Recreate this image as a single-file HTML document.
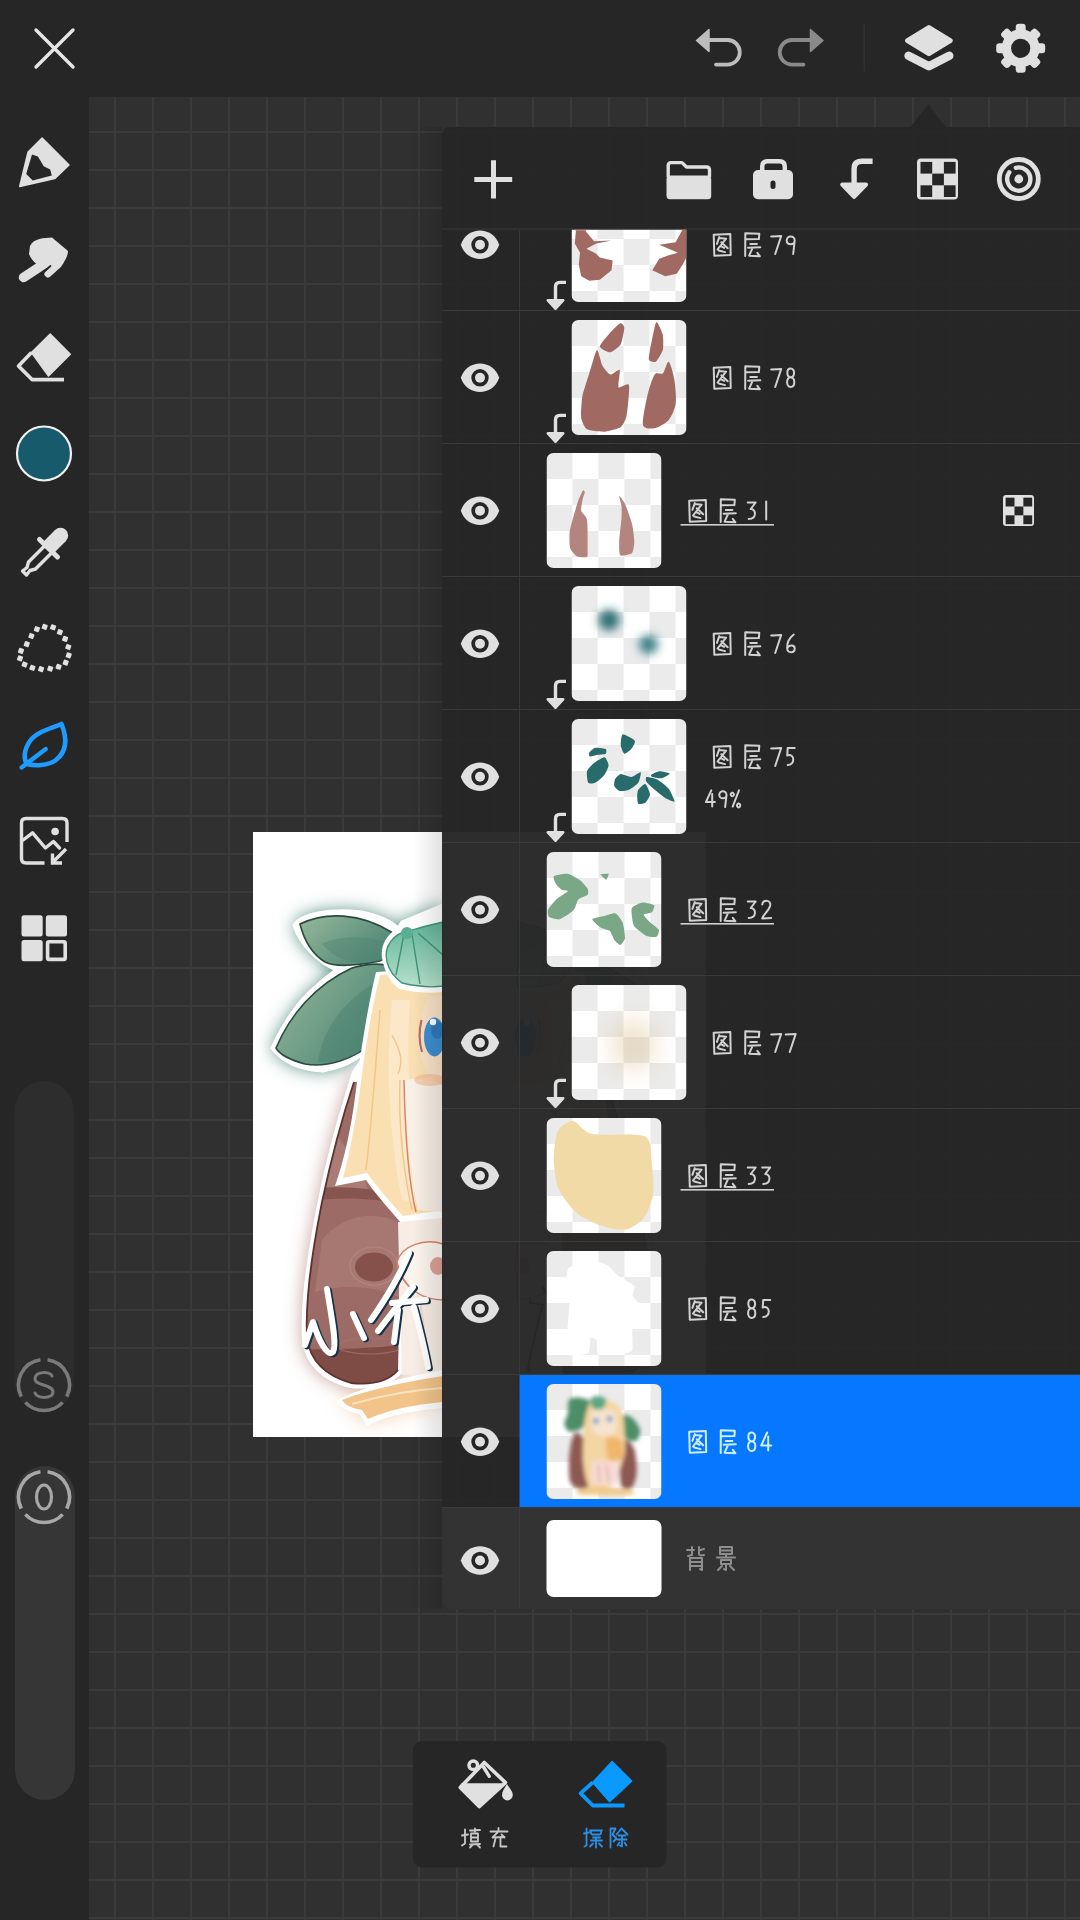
<!DOCTYPE html>
<html><head><meta charset="utf-8"><title>layers</title>
<style>html,body{margin:0;padding:0;width:1080px;height:1920px;overflow:hidden;background:#262626;font-family:"Liberation Sans",sans-serif;}</style>
</head><body>
<svg width="1080" height="1920" viewBox="0 0 1080 1920" style="position:absolute;left:0;top:0">
<defs>
<pattern id="chk" x="0" y="0" width="52" height="52" patternUnits="userSpaceOnUse">
<rect width="52" height="52" fill="#ffffff"/><rect width="26" height="26" fill="#ebebeb"/><rect x="26" y="26" width="26" height="26" fill="#ebebeb"/></pattern>
<pattern id="grid" x="0" y="0" width="38" height="38" patternUnits="userSpaceOnUse" patternTransform="translate(114,131)">
<rect width="38" height="38" fill="#303030"/><rect width="2" height="38" fill="#3a3a3a"/><rect width="38" height="2" fill="#3a3a3a"/></pattern>
<filter id="glowG" x="-30%" y="-30%" width="160%" height="160%"><feGaussianBlur stdDeviation="9"/></filter>
<filter id="soft" x="-10%" y="-10%" width="120%" height="120%"><feGaussianBlur stdDeviation="0.6"/></filter>
</defs>
<rect width="1080" height="1920" fill="#262626"/>
<rect x="89" y="97" width="991" height="1823" fill="url(#grid)"/>
<g>
<clipPath id="artclip"><rect x="253" y="832" width="453" height="605"/></clipPath>
<linearGradient id="leafg" x1="0" y1="0" x2="1" y2="0.6"><stop offset="0" stop-color="#96b99a"/><stop offset="1" stop-color="#4f8676"/></linearGradient>
<linearGradient id="bowg" x1="0" y1="0" x2="0" y2="1"><stop offset="0" stop-color="#62b59a"/><stop offset="1" stop-color="#b5e0cc"/></linearGradient>
<g clip-path="url(#artclip)">
<rect x="253" y="832" width="453" height="605" fill="#ffffff"/>
<g id="artmain">
<g filter="url(#glowG)">
<path d="M294,925 C300,914 330,908 362,912 C380,916 392,922 398,928 L402,922 L443,905 L443,990 L376,1040 C366,1055 350,1066 323,1071 C300,1070 282,1062 272,1048 C285,1020 300,1000 314,988 C322,980 330,974 336,970 C318,962 300,945 294,925 Z" fill="#4f8a7c" opacity="1"/>
<path d="M351,1076 C340,1110 328,1150 318,1200 C308,1250 300,1300 302,1340 C306,1365 320,1380 350,1388 C370,1390 390,1387 402,1373 L404,1076 Z" fill="#b07c78" opacity="0.7"/>
<path d="M339,1400 C360,1390 400,1378 443,1373 L443,1405 C410,1410 380,1420 367,1424 Z" fill="#e9b27a" opacity="0.5"/>
</g>
<!-- white silhouettes -->
<path d="M294,925 C300,914 330,908 362,912 C380,916 392,922 398,928 L402,922 L443,905 L443,990 L376,1040 C366,1055 350,1066 323,1071 C300,1070 282,1062 272,1048 C285,1020 300,1000 314,988 C322,980 330,974 336,970 C318,962 300,945 294,925 Z" fill="#ffffff" stroke="#ffffff" stroke-width="3"/>
<path d="M376,1036 C366,1052 358,1062 352,1072 C340,1110 328,1150 318,1200 C308,1250 300,1300 302,1340 C306,1365 320,1380 350,1388 C370,1390 390,1387 402,1373 L443,1373 L443,1036 Z" fill="#ffffff"/>
<!-- upper leaf -->
<path d="M300,924 C325,912 360,912 393,933 C392,948 388,958 380,961 C355,966 335,967 325,962 C312,954 304,940 300,924 Z" fill="url(#leafg)" stroke="#2a4a40" stroke-width="1.6"/>
<path d="M322,944 C340,934 372,936 392,944 C390,955 386,960 378,961 C355,965 338,962 322,944 Z" fill="#4f8474" opacity="0.45"/>
<!-- lower leaf -->
<path d="M276,1048 C290,1015 315,985 352,968 C365,964 380,963 392,966 C396,990 392,1020 375,1040 C355,1060 325,1068 305,1064 C290,1060 280,1055 276,1048 Z" fill="url(#leafg)" stroke="#2a4a40" stroke-width="1.6"/>
<path d="M318,1062 C322,1030 345,995 390,975 C394,1000 390,1022 375,1040 C358,1056 338,1064 318,1062 Z" fill="#4a7f70" opacity="0.5"/>
<!-- brown shoot -->
<clipPath id="brownclip"><path d="M354,1082 C343,1115 332,1155 322,1202 C312,1252 305,1300 307,1338 C310,1360 323,1375 351,1383 C370,1385 388,1382 398,1370 L402,1082 Z"/></clipPath>
<path d="M354,1082 C343,1115 332,1155 322,1202 C312,1252 305,1300 307,1338 C310,1360 323,1375 351,1383 C370,1385 388,1382 398,1370 L402,1082 Z" fill="#9d6b65"/>
<g clip-path="url(#brownclip)">
<path d="M320,1120 C345,1140 362,1170 368,1190 L310,1195 Z" fill="#ad817b" opacity="0.8"/>
<path d="M322,1240 C345,1212 378,1210 404,1225 L404,1300 C385,1288 350,1282 315,1292 Z" fill="#a97c76" opacity="0.75"/>
<path d="M300,1190 C340,1184 380,1188 404,1198 L404,1206 C380,1198 340,1196 300,1202 Z" fill="#87554f"/>
<ellipse cx="374" cy="1266" rx="24" ry="19" fill="none" stroke="#b58a85" stroke-width="1.2" opacity="0.8"/>
<ellipse cx="374" cy="1267" rx="19" ry="14.5" fill="#86514b"/>
<path d="M300,1349 C330,1350 370,1348 404,1345 L404,1400 L300,1400 Z" fill="#7e4b45"/>
<ellipse cx="370" cy="1346" rx="32" ry="8" fill="none" stroke="#a77570" stroke-width="1.2" opacity="0.7"/>
</g>
<path d="M354,1082 C343,1115 332,1155 322,1202 C312,1252 305,1300 307,1338 C310,1360 323,1375 351,1383 C370,1385 388,1382 398,1370" fill="none" stroke="#5a3331" stroke-width="1.8"/>
<!-- hair -->
<path d="M376,972 L443,968 L443,1217 L402,1224 C388,1208 374,1192 366,1180 L335,1186 C344,1160 351,1130 356,1090 C361,1050 367,1010 376,972 Z" fill="#ffffff"/>
<path d="M380,975 L443,972 L443,1210 L403,1216 C391,1203 378,1188 367,1173 L343,1178 C349,1156 355,1126 360,1090 C365,1050 371,1012 380,975 Z" fill="#f9dfb2"/>
<path d="M392,1000 C386,1060 388,1130 402,1200 L425,1205 C412,1140 405,1070 410,1000 Z" fill="#fce8c8"/>
<path d="M380,1010 C376,1060 372,1120 366,1170 M392,1035 C400,1050 404,1060 398,1074 M400,1080 C398,1130 405,1180 412,1210" fill="none" stroke="#efc684" stroke-width="1.4"/>
<path d="M404,1080 L443,1076 L443,1212 L418,1210 C410,1170 406,1120 404,1080 Z" fill="#f8efe6"/>
<path d="M404,1080 C405,1130 408,1180 416,1212" fill="none" stroke="#d8846c" stroke-width="1.5"/>
<!-- bow -->
<path d="M383,962 C378,944 390,928 408,925 C425,920 443,916 443,916 L443,992 C430,994 414,992 399,989 C390,982 385,972 383,962 Z" fill="#ffffff"/>
<path d="M387,962 C383,946 394,933 409,931 C425,926 443,922 443,922 L443,986 C430,988 415,986 402,983 C394,977 389,970 387,962 Z" fill="url(#bowg)" stroke="#3d9278" stroke-width="1.3"/>
<path d="M404,934 L396,975 M412,934 L420,984 M418,933 L443,955" stroke="#3d9278" stroke-width="1.4" fill="none"/>
<circle cx="407" cy="933" r="6" fill="#5aae93"/>
<!-- face -->
<path d="M428,996 C421,1010 417,1030 419,1050 C422,1068 431,1080 443,1086 L443,996 Z" fill="#fbe2c8"/>
<ellipse cx="434.5" cy="1037" rx="10.5" ry="19.5" fill="#3d8fcf"/>
<ellipse cx="437" cy="1030" rx="6" ry="9" fill="#2b70b2" opacity="0.7"/>
<path d="M421.5,1020 C419,1030 419,1042 422,1052" fill="none" stroke="#b77262" stroke-width="2.2"/>
<circle cx="433" cy="1022" r="3.2" fill="#ffffff"/>
<ellipse cx="430" cy="1080" rx="16" ry="6" fill="#f3b98e" opacity="0.6"/>
<!-- body lower -->
<path d="M398,1222 L443,1218 L443,1375 L402,1375 Z" fill="#f7ede4"/>
<path d="M397,1262 C402,1245 425,1238 443,1244 L443,1300 C425,1300 402,1290 397,1262 Z" fill="#fbf5ee" stroke="#d67f6c" stroke-width="1.5"/>
<ellipse cx="438" cy="1266" rx="8" ry="9" fill="#dea199"/>
<path d="M420,1300 L430,1372" stroke="#e8d8cc" stroke-width="2" fill="none"/>
<!-- text strokes -->
<g fill="none" stroke-linecap="round" stroke-linejoin="round">
<g stroke="#14304a" stroke-width="6.2" transform="translate(1.8,1.2)"><path d="M327,1289 C332,1320 337,1345 333,1352 C327,1358 318,1338 313,1322 L305,1345"/><path d="M353,1314 L364,1338"/><path d="M409,1253 C400,1275 385,1300 371,1320"/><path d="M392,1303 L426,1300"/><path d="M378,1331 C390,1315 402,1300 413,1287"/><path d="M398,1310 L394,1342"/><path d="M414,1307 C420,1330 425,1350 428,1367"/></g>
<g stroke="#ffffff" stroke-width="6"><path d="M327,1289 C332,1320 337,1345 333,1352 C327,1358 318,1338 313,1322 L305,1345"/><path d="M353,1314 L364,1338"/><path d="M409,1253 C400,1275 385,1300 371,1320"/><path d="M392,1303 L426,1300"/><path d="M378,1331 C390,1315 402,1300 413,1287"/><path d="M398,1310 L394,1342"/><path d="M414,1307 C420,1330 425,1350 428,1367"/></g>
</g>
<!-- swoosh -->
<path d="M337,1400 C360,1388 400,1378 443,1370 L443,1408 C410,1411 385,1416 367,1426 L360,1414 C350,1412 342,1410 337,1400 Z" fill="#ffffff"/>
<path d="M342,1400 C362,1392 402,1382 443,1376 L443,1402 C412,1405 388,1410 368,1419 L362,1410 C352,1408 346,1406 342,1400 Z" fill="#f2c48a"/>
<path d="M352,1404 C380,1396 410,1390 443,1388" stroke="#fbe3c0" stroke-width="2" fill="none"/>
</g>
<clipPath id="rightclip"><rect x="443" y="832" width="263" height="605"/></clipPath>
<g clip-path="url(#rightclip)"><use href="#artmain" transform="translate(960,0) scale(-1,1)"/></g>
</g></g>
<g>
<path d="M36,30 L73,67 M73,30 L36,67" stroke="#e6e6e6" stroke-width="3.4" stroke-linecap="round"/>
<!-- undo -->
<path d="M708,40 L727.5,40 A12.3,12.3 0 0 1 727.5,64.6 L716,64.6" fill="none" stroke="#bdbdbd" stroke-width="3.8" stroke-linecap="round"/>
<path d="M696.5,40.5 L709,29.5 L709,51.5 Z" fill="#bdbdbd" stroke="#bdbdbd" stroke-width="1.5" stroke-linejoin="round"/>
<!-- redo -->
<g transform="translate(1519.5,0) scale(-1,1)">
<path d="M708,40 L727.5,40 A12.3,12.3 0 0 1 727.5,64.6 L716,64.6" fill="none" stroke="#8a8a8a" stroke-width="3.8" stroke-linecap="round"/>
<path d="M696.5,40.5 L709,29.5 L709,51.5 Z" fill="#8a8a8a" stroke="#8a8a8a" stroke-width="1.5" stroke-linejoin="round"/>
</g>
<rect x="863.5" y="24" width="1.5" height="47" fill="#303030"/>
<!-- layers -->
<path d="M907.6,40.6 L928.9,27.6 L950.2,40.6 L928.9,53.6 Z" fill="#e0e0e0" stroke="#e0e0e0" stroke-width="5" stroke-linejoin="round"/>
<path d="M908.5,55.8 L928.9,66.2 L949.3,55.8" fill="none" stroke="#e0e0e0" stroke-width="8.4" stroke-linejoin="round" stroke-linecap="round"/>
<!-- gear -->
<g transform="translate(1020.7,48.3)"><circle r="19" fill="#e0e0e0"/><rect x="-5" y="-24.5" width="10" height="10" rx="3.2" fill="#e0e0e0" transform="rotate(0)"/><rect x="-5" y="-24.5" width="10" height="10" rx="3.2" fill="#e0e0e0" transform="rotate(45)"/><rect x="-5" y="-24.5" width="10" height="10" rx="3.2" fill="#e0e0e0" transform="rotate(90)"/><rect x="-5" y="-24.5" width="10" height="10" rx="3.2" fill="#e0e0e0" transform="rotate(135)"/><rect x="-5" y="-24.5" width="10" height="10" rx="3.2" fill="#e0e0e0" transform="rotate(180)"/><rect x="-5" y="-24.5" width="10" height="10" rx="3.2" fill="#e0e0e0" transform="rotate(225)"/><rect x="-5" y="-24.5" width="10" height="10" rx="3.2" fill="#e0e0e0" transform="rotate(270)"/><rect x="-5" y="-24.5" width="10" height="10" rx="3.2" fill="#e0e0e0" transform="rotate(315)"/><circle r="9.6" fill="#262626"/></g>
<!-- panel pointer -->
</g>
<g>
<!-- pencil -->
<path d="M19.7,186.4 L28.1,152 L42.1,138.1 L69,165 L54.7,178.6 Z" fill="#e0e0e0" stroke="#e0e0e0" stroke-width="1.5" stroke-linejoin="round"/>
<path d="M32,154.6 L37.9,156.6 L43.7,166.3 L50.2,169.5 L51.8,175.4 L32.7,180.5 L26.2,174 Z" fill="#262626"/>
<!-- smudge -->
<path d="M30,246 C34,238 44,238 52,237.5 L68,251 C68,256 65,260 63,264 C60,268 54,270 48,268 C40,268 32,262 29,254 Z" fill="#e0e0e0"/>
<path d="M44,264 L23.5,277.5" stroke="#e0e0e0" stroke-width="9.5" stroke-linecap="round"/>
<path d="M58,265 L48,274" stroke="#e0e0e0" stroke-width="7" stroke-linecap="round"/>
<path d="M50.5,266 L41,274" stroke="#262626" stroke-width="1.8" stroke-linecap="round"/>
<!-- eraser -->
<path d="M31.5,352.5 L50.2,334 L70.3,354.3 L48.5,376 Z" fill="#e0e0e0" stroke="#e0e0e0" stroke-width="1.5" stroke-linejoin="round"/>
<path d="M31.5,352.5 L18.5,366 L32,379.6 L64,379.6" fill="none" stroke="#e0e0e0" stroke-width="3.6" stroke-linejoin="round"/>
<!-- color -->
<circle cx="44" cy="453.5" r="27" fill="#175a6c" stroke="#f0f0f0" stroke-width="2.2"/>
<!-- eyedropper -->
<circle cx="60.5" cy="535.5" r="7.7" fill="#e0e0e0"/><path d="M55.06,530.06 L65.94,540.94 L53.74,553.24 L42.86,542.36 Z" fill="#e0e0e0"/>
<path d="M39.5,539.5 L57.5,557" stroke="#e0e0e0" stroke-width="5" stroke-linecap="round"/>
<path d="M44.5,546 L28.5,562 L27,567.5 L22.5,571 L26.5,575 L30,570.5 L35.5,569 L51.5,553" fill="none" stroke="#e0e0e0" stroke-width="3.4" stroke-linejoin="round"/>
<!-- lasso -->
<rect x="42.1" y="624.3" width="5.2" height="5.2" rx="0.8" fill="#e0e0e0" transform="rotate(20 44.7 626.9)"/><rect x="50.5" y="624.7" width="5.2" height="5.2" rx="0.8" fill="#e0e0e0" transform="rotate(20 53.1 627.3)"/><rect x="57.3" y="629.5" width="5.2" height="5.2" rx="0.8" fill="#e0e0e0" transform="rotate(20 59.9 632.1)"/><rect x="62.5" y="636.3" width="5.2" height="5.2" rx="0.8" fill="#e0e0e0" transform="rotate(20 65.1 638.9)"/><rect x="65.7" y="644.4" width="5.2" height="5.2" rx="0.8" fill="#e0e0e0" transform="rotate(20 68.3 647)"/><rect x="66.1" y="652.8" width="5.2" height="5.2" rx="0.8" fill="#e0e0e0" transform="rotate(20 68.7 655.4)"/><rect x="63.1" y="660.0" width="5.2" height="5.2" rx="0.8" fill="#e0e0e0" transform="rotate(20 65.7 662.6)"/><rect x="56.0" y="664.2" width="5.2" height="5.2" rx="0.8" fill="#e0e0e0" transform="rotate(20 58.6 666.8)"/><rect x="47.6" y="666.1" width="5.2" height="5.2" rx="0.8" fill="#e0e0e0" transform="rotate(20 50.2 668.7)"/><rect x="38.5" y="666.5" width="5.2" height="5.2" rx="0.8" fill="#e0e0e0" transform="rotate(20 41.1 669.1)"/><rect x="29.8" y="665.2" width="5.2" height="5.2" rx="0.8" fill="#e0e0e0" transform="rotate(20 32.4 667.8)"/><rect x="22.0" y="661.9" width="5.2" height="5.2" rx="0.8" fill="#e0e0e0" transform="rotate(20 24.6 664.5)"/><rect x="17.4" y="655.8" width="5.2" height="5.2" rx="0.8" fill="#e0e0e0" transform="rotate(20 20 658.4)"/><rect x="18.4" y="648.3" width="5.2" height="5.2" rx="0.8" fill="#e0e0e0" transform="rotate(20 21 650.9)"/><rect x="24.2" y="641.5" width="5.2" height="5.2" rx="0.8" fill="#e0e0e0" transform="rotate(20 26.8 644.1)"/><rect x="28.8" y="633.4" width="5.2" height="5.2" rx="0.8" fill="#e0e0e0" transform="rotate(20 31.4 636)"/><rect x="34.3" y="626.6" width="5.2" height="5.2" rx="0.8" fill="#e0e0e0" transform="rotate(20 36.9 629.2)"/>
<!-- leaf -->
<path d="M61.5,724 C50,729 36,732 30,741 C23,751 24,760 27,764 C34,766 48,766 56,760 C66,752 68,740 61.5,724 Z" fill="none" stroke="#1e9bff" stroke-width="4.6" stroke-linejoin="round"/>
<path d="M21.5,767.5 L45.8,749" stroke="#1e9bff" stroke-width="4.4" stroke-linecap="round"/>
<!-- image import -->
<path d="M44.5,863 L26,863 Q21.5,863 21.5,858.5 L21.5,823 Q21.5,818.5 26,818.5 L62.5,818.5 Q67,818.5 67,823 L67,842" fill="none" stroke="#e0e0e0" stroke-width="3.4"/>
<path d="M22.5,840.5 L32.6,832.8 L45.4,848 L53.4,841.5 L59.5,848" fill="none" stroke="#e0e0e0" stroke-width="3.4" stroke-linejoin="round" stroke-linecap="round"/>
<circle cx="55.1" cy="831.5" r="3.8" fill="#e0e0e0"/>
<path d="M66,849 L53,862 M52.5,853.5 L52.5,863 L62,863" fill="none" stroke="#e0e0e0" stroke-width="3.4" stroke-linecap="butt"/>
<!-- grid -->
<rect x="21.5" y="915.2" width="21.2" height="21.2" rx="2.5" fill="#e0e0e0"/>
<rect x="45.8" y="915.2" width="21.2" height="21.2" rx="2.5" fill="#e0e0e0"/>
<rect x="21.5" y="940" width="21.2" height="21.2" rx="2.5" fill="#e0e0e0"/>
<rect x="47.6" y="941.8" width="17.6" height="17.6" rx="1.5" fill="none" stroke="#e0e0e0" stroke-width="3.6"/>
<!-- sliders -->
<rect x="14.5" y="1081" width="59.5" height="330" rx="29.75" fill="#2d2d2d"/>
<rect x="15" y="1466" width="60" height="334" rx="30" fill="#363636"/>
<circle cx="44" cy="1385" r="27" fill="#2d2d2d"/><path d="M47.55,1359.75 A25.5,25.5 0 0 1 66.72,1396.58 M62.65,1402.39 A25.5,25.5 0 0 1 25.35,1402.39 M21.28,1396.58 A25.5,25.5 0 0 1 40.45,1359.75" fill="none" stroke="#7a7a7a" stroke-width="3.6"/><path d="M44,1357 L44,1365" stroke="#2d2d2d" stroke-width="3"/><path d="M52,1376 C50,1371 35,1371 35,1379 C35,1386 53,1384 53,1392 C53,1399 37,1399 35,1393" fill="none" stroke="#7a7a7a" stroke-width="3" stroke-linecap="round"/>
<circle cx="44" cy="1497" r="27" fill="#363636"/><path d="M47.55,1471.75 A25.5,25.5 0 0 1 66.72,1508.58 M62.65,1514.39 A25.5,25.5 0 0 1 25.35,1514.39 M21.28,1508.58 A25.5,25.5 0 0 1 40.45,1471.75" fill="none" stroke="#a8a8a8" stroke-width="3.6"/><path d="M44,1469 L44,1477" stroke="#363636" stroke-width="3"/><ellipse cx="44" cy="1497" rx="7.5" ry="12" fill="none" stroke="#a8a8a8" stroke-width="3.2"/>
</g>
<path d="M910,127.5 L928.5,104.5 L946,127.5 Z" fill="#262626"/>
<linearGradient id="pshadow" x1="0" y1="0" x2="1" y2="0"><stop offset="0" stop-color="#000" stop-opacity="0"/><stop offset="1" stop-color="#000" stop-opacity="0.11"/></linearGradient>
<rect x="414" y="127" width="28" height="1482" fill="url(#pshadow)"/>
<clipPath id="panelclip"><rect x="442" y="127" width="700" height="1482" rx="8"/></clipPath>
<g clip-path="url(#panelclip)">
<rect x="442" y="127" width="700" height="1482" fill="#262626" fill-opacity="0.97"/>
<path d="M493.5,160.3 L493.5,198.4 M474.3,179.4 L512.2,179.4" stroke="#e0e0e0" stroke-width="5"/>
<path d="M668.2,177 L668.2,165.6 Q668.2,162.6 671.2,162.6 L682,162.6 L686.5,167 L706.5,167 Q709.5,167 709.5,170 L709.5,177" fill="none" stroke="#e0e0e0" stroke-width="3.4" stroke-linejoin="round"/>
<rect x="666.5" y="175.5" width="44.7" height="23.8" rx="3.5" fill="#e0e0e0"/>
<path d="M762.2,172 L762.2,166.5 Q762.2,161.2 767.5,161.2 L779.5,161.2 Q784.8,161.2 784.8,166.5 L784.8,172" fill="none" stroke="#e0e0e0" stroke-width="4.5"/>
<rect x="753" y="170" width="40" height="29.3" rx="5" fill="#e0e0e0"/><rect x="770.5" y="180.5" width="5" height="8.5" rx="2.5" fill="#262626"/>
<path d="M872.6,161.3 L862,161.3 Q854.1,161.3 854.1,169 L854.1,185" fill="none" stroke="#e0e0e0" stroke-width="5.4"/>
<path d="M842.3,184.5 L866,184.5 L854.1,196.8 Z" fill="#e0e0e0" stroke="#e0e0e0" stroke-width="4.2" stroke-linejoin="round"/>
<g transform="translate(917,158.4) scale(1.0)"><rect x="0" y="0" width="41" height="41" rx="4" fill="#e0e0e0"/><rect x="3.50" y="3.50" width="11.70" height="11.70" fill="#262626"/><rect x="26.90" y="3.50" width="11.70" height="11.70" fill="#262626"/><rect x="15.20" y="15.20" width="11.70" height="11.70" fill="#262626"/><rect x="3.50" y="26.90" width="11.70" height="11.70" fill="#262626"/><rect x="26.90" y="26.90" width="11.70" height="11.70" fill="#262626"/></g>
<circle cx="1018.8" cy="179" r="19.5" fill="none" stroke="#e0e0e0" stroke-width="4.8"/>
<path d="M1015.80,167.80 A11.6,11.6 0 1 1 1009.30,172.35" fill="none" stroke="#e0e0e0" stroke-width="4.4" stroke-linecap="round"/>
<circle cx="1018.8" cy="179" r="4.4" fill="#e0e0e0"/>
<rect x="442" y="228.5" width="640" height="1.2" fill="#363636"/>
<clipPath id="rowsclip"><rect x="442" y="229.7" width="640" height="1380"/></clipPath>
<g clip-path="url(#rowsclip)">
<rect x="442" y="310" width="640" height="1" fill="#3a3a3a"/>
<g transform="translate(480,244.8)">
<path d="M-19.2,0 C-13,-19 13,-19 19.2,0 C13,19 -13,19 -19.2,0 Z" fill="#e0e0e0"/>
<circle r="8.7" fill="#262626"/><circle r="5" fill="#e0e0e0"/></g>
<g transform="translate(571.5,187)">
<clipPath id="tc79"><rect width="115" height="115" rx="7"/></clipPath>
<g clip-path="url(#tc79)"><rect width="115" height="115" fill="url(#chk)"/><path d="M4.4,43.7 L13.8,43.7 L22.5,54.2 L40.0,53.6 L24.8,56.5 L14.9,61.8 L24.3,66.4 L28.3,70.5 L41.2,73.4 L40.0,83.3 L28.3,92.7 L17.8,93.8 L9.7,89.2 L7.3,77.5 L8.5,65.8 L3.3,56.5 Z" fill="#a06a62"/>
<path d="M112.3,40.0 L115.0,40.0 L115.0,70.0 L111.2,77.5 L105.3,86.8 L93.7,89.2 L80.8,83.3 L87.8,71.7 L97.2,68.2 L106.5,65.8 L87.8,57.7 L104.2,55.3 Z" fill="#a06a62"/>
<path d="M0,40 L20,40 L13.8,43.7 L4.4,43.7 Z" fill="#a06a62"/></g></g>
<g transform="translate(545.5,279)">
<path d="M20.5,3.4 L14.5,3.4 Q10,3.4 10,8 L10,22" fill="none" stroke="#e0e0e0" stroke-width="3.4"/>
<path d="M2.4,21.3 L17.6,21.3 L10,29.6 Z" fill="#e0e0e0" stroke="#e0e0e0" stroke-width="2.8" stroke-linejoin="round"/></g>
<g transform="translate(711.7,232.5)" fill="none" stroke="#d2d2d2" stroke-width="2.0" stroke-linecap="round" stroke-linejoin="round">
<path d="M2,2.2 L18.6,1.4 L19,22.4 L2.6,23.2 Z"/>
<path d="M7.6,4.6 L5.2,11.4 M7.8,5.4 L14.4,6.2 L5.8,17 M9.6,9.8 L16,15.8 M8.6,13.4 L12.4,15.4 M7,18 L13.4,19.6"/>
</g>
<g transform="translate(744.3000000000001,232.5)" fill="none" stroke="#d2d2d2" stroke-width="2.0" stroke-linecap="round" stroke-linejoin="round">
<path d="M1,0.8 L15,1.2 L14.6,6.6 L1.2,6.8 M1,0.8 L0.9,23.6 M6,11.6 L12.6,11.6 M3.8,15.2 L16,14.8 M8.2,15.6 L4.8,23.2 L15.6,23.8 M13,20.4 L15.6,23.8"/>
</g>
<path transform="translate(770.2,234.5) scale(1.0)" d="M1,2 L11,1.5 L5,19.5" fill="none" stroke="#d2d2d2" stroke-width="2.00" stroke-linecap="round" stroke-linejoin="round"/>
<path transform="translate(784.7,234.5) scale(1.0)" d="M10,6 C10,0.5 2,0.5 2,6 C2,11 10,11 10,6 L8.5,19.5" fill="none" stroke="#d2d2d2" stroke-width="2.00" stroke-linecap="round" stroke-linejoin="round"/>
<rect x="442" y="443" width="640" height="1" fill="#3a3a3a"/>
<g transform="translate(480,377.8)">
<path d="M-19.2,0 C-13,-19 13,-19 19.2,0 C13,19 -13,19 -19.2,0 Z" fill="#e0e0e0"/>
<circle r="8.7" fill="#262626"/><circle r="5" fill="#e0e0e0"/></g>
<g transform="translate(571.5,320)">
<clipPath id="tc78"><rect width="115" height="115" rx="7"/></clipPath>
<g clip-path="url(#tc78)"><rect width="115" height="115" fill="url(#chk)"/><path d="M25.4,30.0 C26.7,29.2 29.4,42.8 30.7,45.2 C32.0,47.7 37.0,54.0 38.8,54.5 C40.5,55.0 47.4,48.5 48.2,49.8 C49.0,51.1 46.1,65.8 47.0,67.3 C47.9,68.8 56.7,62.2 57.5,65.0 C58.3,67.8 56.0,91.1 55.2,95.3 C54.4,99.5 51.5,105.4 49.3,107.0 C47.1,108.6 36.4,111.5 33.0,111.7 C29.6,111.9 17.8,110.7 15.5,109.3 C13.2,107.9 10.2,101.0 9.7,97.7 C9.2,94.4 10.0,81.1 10.8,76.7 C11.6,72.3 16.3,58.0 17.8,53.3 C19.3,48.6 24.1,30.8 25.4,30.0 Z" fill="#a06a62"/>
<path d="M48.8,3.2 C50.2,2.7 52.8,5.7 52.8,7.8 C52.8,9.9 50.7,21.8 49.3,24.2 C47.9,26.6 40.9,32.1 38.8,32.3 C36.7,32.5 28.3,28.5 28.3,26.5 C28.3,24.5 36.8,14.8 38.8,12.5 C40.8,10.2 47.4,3.7 48.8,3.2 Z" fill="#a06a62"/>
<path d="M84.9,2.0 C86.0,1.6 90.7,12.0 91.3,14.8 C91.9,17.6 92.0,27.3 91.3,30.0 C90.6,32.7 85.7,40.8 84.3,41.7 C82.9,42.6 77.6,41.6 77.3,39.3 C77.0,37.0 80.0,22.0 80.8,18.3 C81.6,14.6 83.9,2.4 84.9,2.0 Z" fill="#a06a62"/>
<path d="M97.2,41.7 C98.8,42.6 102.1,54.7 103.0,60.3 C103.9,65.9 105.0,78.4 104.2,83.7 C103.4,89.0 100.0,96.7 97.2,100.0 C94.4,103.3 86.6,107.6 83.2,108.2 C79.8,108.8 72.4,109.2 71.5,104.7 C70.6,100.2 74.6,81.0 76.2,74.3 C77.8,67.6 81.2,57.3 83.2,54.5 C85.2,51.7 89.4,55.0 91.3,53.3 C93.2,51.6 95.6,40.8 97.2,41.7 Z" fill="#a06a62"/></g></g>
<g transform="translate(545.5,412)">
<path d="M20.5,3.4 L14.5,3.4 Q10,3.4 10,8 L10,22" fill="none" stroke="#e0e0e0" stroke-width="3.4"/>
<path d="M2.4,21.3 L17.6,21.3 L10,29.6 Z" fill="#e0e0e0" stroke="#e0e0e0" stroke-width="2.8" stroke-linejoin="round"/></g>
<g transform="translate(711.7,365.5)" fill="none" stroke="#d2d2d2" stroke-width="2.0" stroke-linecap="round" stroke-linejoin="round">
<path d="M2,2.2 L18.6,1.4 L19,22.4 L2.6,23.2 Z"/>
<path d="M7.6,4.6 L5.2,11.4 M7.8,5.4 L14.4,6.2 L5.8,17 M9.6,9.8 L16,15.8 M8.6,13.4 L12.4,15.4 M7,18 L13.4,19.6"/>
</g>
<g transform="translate(744.3000000000001,365.5)" fill="none" stroke="#d2d2d2" stroke-width="2.0" stroke-linecap="round" stroke-linejoin="round">
<path d="M1,0.8 L15,1.2 L14.6,6.6 L1.2,6.8 M1,0.8 L0.9,23.6 M6,11.6 L12.6,11.6 M3.8,15.2 L16,14.8 M8.2,15.6 L4.8,23.2 L15.6,23.8 M13,20.4 L15.6,23.8"/>
</g>
<path transform="translate(770.2,367.5) scale(1.0)" d="M1,2 L11,1.5 L5,19.5" fill="none" stroke="#d2d2d2" stroke-width="2.00" stroke-linecap="round" stroke-linejoin="round"/>
<path transform="translate(784.7,367.5) scale(1.0)" d="M6,1 C1.5,1 1.5,9.5 6,9.8 C10.8,10.2 10.8,19.5 6,19.5 C1.2,19.5 1.2,10.2 6,9.8 C10.5,9.5 10.5,1 6,1 Z" fill="none" stroke="#d2d2d2" stroke-width="2.00" stroke-linecap="round" stroke-linejoin="round"/>
<rect x="442" y="576" width="640" height="1" fill="#3a3a3a"/>
<g transform="translate(480,510.8)">
<path d="M-19.2,0 C-13,-19 13,-19 19.2,0 C13,19 -13,19 -19.2,0 Z" fill="#e0e0e0"/>
<circle r="8.7" fill="#262626"/><circle r="5" fill="#e0e0e0"/></g>
<g transform="translate(546.5,453)">
<clipPath id="tc31"><rect width="115" height="115" rx="7"/></clipPath>
<g clip-path="url(#tc31)"><rect width="115" height="115" fill="url(#chk)"/><path d="M36.5,37.6 C37.1,36.8 38.4,38.3 38.3,39.3 C38.2,40.3 36.2,45.6 35.9,47.5 C35.5,49.4 34.3,56.0 34.8,58.0 C35.3,60.0 40.0,63.1 40.6,67.3 C41.2,71.5 41.3,96.3 41.2,100.0 C41.1,103.7 41.0,103.8 40.0,104.1 C39.0,104.4 32.3,104.4 30.7,103.5 C29.1,102.6 24.5,97.8 23.7,95.3 C22.9,92.8 22.8,82.3 23.1,79.0 C23.5,75.7 26.3,65.9 27.2,62.7 C28.1,59.6 30.9,50.0 31.8,47.5 C32.7,45.0 35.9,38.4 36.5,37.6 Z" fill="#b4847e"/>
<path d="M72.7,42.8 C73.0,42.6 77.2,48.2 78.5,51.0 C79.8,53.8 84.6,67.1 85.5,70.8 C86.4,74.5 87.8,85.4 87.8,88.3 C87.8,91.2 86.9,98.6 85.5,100.0 C84.1,101.4 75.1,103.5 73.8,102.3 C72.5,101.1 72.6,92.0 72.7,88.3 C72.8,84.6 74.8,68.5 75.0,65.0 C75.2,61.5 75.2,55.5 75.0,53.3 C74.8,51.1 72.4,43.0 72.7,42.8 Z" fill="#b4847e"/></g></g>
<g transform="translate(687.2,498.5)" fill="none" stroke="#d2d2d2" stroke-width="2.0" stroke-linecap="round" stroke-linejoin="round">
<path d="M2,2.2 L18.6,1.4 L19,22.4 L2.6,23.2 Z"/>
<path d="M7.6,4.6 L5.2,11.4 M7.8,5.4 L14.4,6.2 L5.8,17 M9.6,9.8 L16,15.8 M8.6,13.4 L12.4,15.4 M7,18 L13.4,19.6"/>
</g>
<g transform="translate(719.8000000000001,498.5)" fill="none" stroke="#d2d2d2" stroke-width="2.0" stroke-linecap="round" stroke-linejoin="round">
<path d="M1,0.8 L15,1.2 L14.6,6.6 L1.2,6.8 M1,0.8 L0.9,23.6 M6,11.6 L12.6,11.6 M3.8,15.2 L16,14.8 M8.2,15.6 L4.8,23.2 L15.6,23.8 M13,20.4 L15.6,23.8"/>
</g>
<path transform="translate(745.7,500.5) scale(1.0)" d="M2,2 L10,2 L5,8.5 C11,8.5 11,18.5 3,18.5" fill="none" stroke="#d2d2d2" stroke-width="2.00" stroke-linecap="round" stroke-linejoin="round"/>
<path transform="translate(760.2,500.5) scale(1.0)" d="M6,1 L6,19" fill="none" stroke="#d2d2d2" stroke-width="2.00" stroke-linecap="round" stroke-linejoin="round"/>
<rect x="680.5" y="524" width="93.5" height="1.6" fill="#cfcfcf"/>
<g transform="translate(1003,495) scale(0.7560975609756098)"><rect x="0" y="0" width="41" height="41" rx="4" fill="#e0e0e0"/><rect x="3.50" y="3.50" width="11.70" height="11.70" fill="#262626"/><rect x="26.90" y="3.50" width="11.70" height="11.70" fill="#262626"/><rect x="15.20" y="15.20" width="11.70" height="11.70" fill="#262626"/><rect x="3.50" y="26.90" width="11.70" height="11.70" fill="#262626"/><rect x="26.90" y="26.90" width="11.70" height="11.70" fill="#262626"/></g>
<rect x="442" y="709" width="640" height="1" fill="#3a3a3a"/>
<g transform="translate(480,643.8)">
<path d="M-19.2,0 C-13,-19 13,-19 19.2,0 C13,19 -13,19 -19.2,0 Z" fill="#e0e0e0"/>
<circle r="8.7" fill="#262626"/><circle r="5" fill="#e0e0e0"/></g>
<g transform="translate(571.5,586)">
<clipPath id="tc76"><rect width="115" height="115" rx="7"/></clipPath>
<g clip-path="url(#tc76)"><rect width="115" height="115" fill="url(#chk)"/><defs><filter id="bl76" x="-80%" y="-80%" width="260%" height="260%"><feGaussianBlur stdDeviation="4.8"/></filter></defs>
<g filter="url(#bl76)"><circle cx="37.5" cy="34" r="10.5" fill="#2f6e74"/><circle cx="77" cy="58.5" r="9.5" fill="#3b7f86"/></g></g></g>
<g transform="translate(545.5,678)">
<path d="M20.5,3.4 L14.5,3.4 Q10,3.4 10,8 L10,22" fill="none" stroke="#e0e0e0" stroke-width="3.4"/>
<path d="M2.4,21.3 L17.6,21.3 L10,29.6 Z" fill="#e0e0e0" stroke="#e0e0e0" stroke-width="2.8" stroke-linejoin="round"/></g>
<g transform="translate(711.7,631.5)" fill="none" stroke="#d2d2d2" stroke-width="2.0" stroke-linecap="round" stroke-linejoin="round">
<path d="M2,2.2 L18.6,1.4 L19,22.4 L2.6,23.2 Z"/>
<path d="M7.6,4.6 L5.2,11.4 M7.8,5.4 L14.4,6.2 L5.8,17 M9.6,9.8 L16,15.8 M8.6,13.4 L12.4,15.4 M7,18 L13.4,19.6"/>
</g>
<g transform="translate(744.3000000000001,631.5)" fill="none" stroke="#d2d2d2" stroke-width="2.0" stroke-linecap="round" stroke-linejoin="round">
<path d="M1,0.8 L15,1.2 L14.6,6.6 L1.2,6.8 M1,0.8 L0.9,23.6 M6,11.6 L12.6,11.6 M3.8,15.2 L16,14.8 M8.2,15.6 L4.8,23.2 L15.6,23.8 M13,20.4 L15.6,23.8"/>
</g>
<path transform="translate(770.2,633.5) scale(1.0)" d="M1,2 L11,1.5 L5,19.5" fill="none" stroke="#d2d2d2" stroke-width="2.00" stroke-linecap="round" stroke-linejoin="round"/>
<path transform="translate(784.7,633.5) scale(1.0)" d="M9,1 C4,5 2,10 2.5,15 C3,20 10,20 10,15 C10,11 4,11 2.8,14.5" fill="none" stroke="#d2d2d2" stroke-width="2.00" stroke-linecap="round" stroke-linejoin="round"/>
<rect x="442" y="842" width="640" height="1" fill="#3a3a3a"/>
<g transform="translate(480,776.8)">
<path d="M-19.2,0 C-13,-19 13,-19 19.2,0 C13,19 -13,19 -19.2,0 Z" fill="#e0e0e0"/>
<circle r="8.7" fill="#262626"/><circle r="5" fill="#e0e0e0"/></g>
<g transform="translate(571.5,719)">
<clipPath id="tc75"><rect width="115" height="115" rx="7"/></clipPath>
<g clip-path="url(#tc75)"><rect width="115" height="115" fill="url(#chk)"/><g fill="#276b6b">
<path d="M51.1,15.4 C52.5,14.9 62.4,20.3 63.3,21.8 C64.2,23.3 60.8,28.7 59.8,30.0 C58.8,31.3 53.8,35.1 52.8,34.7 C51.8,34.4 49.5,28.4 49.3,26.5 C49.1,24.6 49.7,15.9 51.1,15.4 Z"/>
<path d="M17.8,33.5 C18.3,32.6 22.1,29.2 23.7,28.8 C25.3,28.4 33.2,29.4 34.2,30.0 C35.2,30.6 35.0,34.1 34.2,34.7 C33.4,35.3 27.6,35.5 26.0,35.8 C24.4,36.1 19.2,37.8 18.4,37.6 C17.6,37.4 17.3,34.4 17.8,33.5 Z"/>
<path d="M15.5,52.2 C16.1,50.2 20.8,45.4 22.5,44.0 C24.2,42.6 31.5,38.0 33.0,38.2 C34.5,38.4 37.1,44.5 37.1,46.3 C37.1,48.0 34.3,54.0 33.0,55.7 C31.7,57.5 25.3,63.0 23.7,63.8 C22.1,64.6 17.5,65.0 16.7,63.8 C15.9,62.6 14.9,54.2 15.5,52.2 Z"/>
<path d="M43.5,60.3 C44.1,59.1 47.7,55.3 49.3,55.1 C50.9,54.9 57.8,58.2 59.8,58.0 C61.8,57.8 68.5,52.7 69.2,53.3 C69.9,53.9 68.0,62.0 66.8,63.8 C65.6,65.5 59.4,70.0 57.5,70.8 C55.6,71.6 49.7,72.3 48.2,72.0 C46.7,71.7 43.4,68.5 42.9,67.3 C42.4,66.1 42.9,61.5 43.5,60.3 Z"/>
<path d="M66.8,70.8 C67.6,69.6 72.6,64.5 73.8,65.0 C75.0,65.5 78.5,73.6 78.5,75.5 C78.5,77.4 75.0,82.8 73.8,83.7 C72.6,84.6 67.6,85.5 66.8,84.8 C66.0,84.1 65.7,78.1 65.7,76.7 C65.7,75.3 66.0,72.0 66.8,70.8 Z"/>
<path d="M75.0,58.0 C76.0,57.8 83.3,59.1 85.5,60.3 C87.7,61.5 95.5,67.5 97.2,69.7 C99.0,71.9 103.3,81.6 103.0,82.5 C102.7,83.4 95.7,80.2 93.7,79.0 C91.7,77.8 85.1,72.4 83.2,70.8 C81.3,69.2 75.8,64.0 75.0,62.7 C74.2,61.4 74.0,58.2 75.0,58.0 Z"/>
<path d="M79.7,55.7 C80.4,55.1 85.9,52.3 87.8,52.2 C89.7,52.1 98.1,53.8 98.3,54.5 C98.5,55.2 92.0,58.9 90.2,59.2 C88.5,59.6 81.8,58.4 80.8,58.0 C79.8,57.6 79.0,56.3 79.7,55.7 Z"/>
</g></g></g>
<g transform="translate(545.5,811)">
<path d="M20.5,3.4 L14.5,3.4 Q10,3.4 10,8 L10,22" fill="none" stroke="#e0e0e0" stroke-width="3.4"/>
<path d="M2.4,21.3 L17.6,21.3 L10,29.6 Z" fill="#e0e0e0" stroke="#e0e0e0" stroke-width="2.8" stroke-linejoin="round"/></g>
<g transform="translate(711.7,744.5)" fill="none" stroke="#d2d2d2" stroke-width="2.0" stroke-linecap="round" stroke-linejoin="round">
<path d="M2,2.2 L18.6,1.4 L19,22.4 L2.6,23.2 Z"/>
<path d="M7.6,4.6 L5.2,11.4 M7.8,5.4 L14.4,6.2 L5.8,17 M9.6,9.8 L16,15.8 M8.6,13.4 L12.4,15.4 M7,18 L13.4,19.6"/>
</g>
<g transform="translate(744.3000000000001,744.5)" fill="none" stroke="#d2d2d2" stroke-width="2.0" stroke-linecap="round" stroke-linejoin="round">
<path d="M1,0.8 L15,1.2 L14.6,6.6 L1.2,6.8 M1,0.8 L0.9,23.6 M6,11.6 L12.6,11.6 M3.8,15.2 L16,14.8 M8.2,15.6 L4.8,23.2 L15.6,23.8 M13,20.4 L15.6,23.8"/>
</g>
<path transform="translate(770.2,746.5) scale(1.0)" d="M1,2 L11,1.5 L5,19.5" fill="none" stroke="#d2d2d2" stroke-width="2.00" stroke-linecap="round" stroke-linejoin="round"/>
<path transform="translate(784.7,746.5) scale(1.0)" d="M10,1.5 L3,1.5 L2.5,9 C10,6 11,18.5 3,18.5" fill="none" stroke="#d2d2d2" stroke-width="2.00" stroke-linecap="round" stroke-linejoin="round"/>
<path transform="translate(705.0,789.5) scale(0.9)" d="M7,1 L1,14 L11,14 M8,5 L8,19" fill="none" stroke="#d2d2d2" stroke-width="2.22" stroke-linecap="round" stroke-linejoin="round"/>
<path transform="translate(717.5,789.5) scale(0.9)" d="M10,6 C10,0.5 2,0.5 2,6 C2,11 10,11 10,6 L8.5,19.5" fill="none" stroke="#d2d2d2" stroke-width="2.22" stroke-linecap="round" stroke-linejoin="round"/>
<path transform="translate(730.0,789.5) scale(0.9)" d="M10,1 L3,19 M2.5,3.5 a1.8,2 0 1,0 0.1,0 M9.5,15.5 a1.8,2.2 0 1,0 0.1,0" fill="none" stroke="#d2d2d2" stroke-width="2.22" stroke-linecap="round" stroke-linejoin="round"/>
<rect x="442" y="975" width="640" height="1" fill="#3a3a3a"/>
<g transform="translate(480,909.8)">
<path d="M-19.2,0 C-13,-19 13,-19 19.2,0 C13,19 -13,19 -19.2,0 Z" fill="#e0e0e0"/>
<circle r="8.7" fill="#262626"/><circle r="5" fill="#e0e0e0"/></g>
<g transform="translate(546.5,852)">
<clipPath id="tc32"><rect width="115" height="115" rx="7"/></clipPath>
<g clip-path="url(#tc32)"><rect width="115" height="115" fill="url(#chk)"/><g fill="#7aa887">
<path d="M7.3,24.2 C8.5,23.1 18.6,21.3 21.3,21.8 C24.0,22.3 32.2,27.3 34.2,28.8 C36.2,30.3 40.5,35.6 41.2,37.0 C41.9,38.4 42.1,41.8 41.2,42.8 C40.3,43.8 33.2,46.0 31.8,47.5 C30.4,49.0 29.1,56.0 27.2,58.0 C25.3,60.0 15.6,66.6 13.2,67.3 C10.8,68.0 3.9,65.9 2.7,65.0 C1.5,64.1 0.8,59.8 1.5,58.0 C2.2,56.2 7.7,49.4 9.7,47.5 C11.7,45.6 20.7,40.2 21.3,39.3 C21.9,38.3 16.7,38.7 15.5,38.0 C14.3,37.3 10.5,33.7 9.7,32.3 C8.9,30.9 6.1,25.2 7.3,24.2 Z"/>
<path d="M54.0,22.4 C54.2,22.0 61.8,21.4 62.2,21.8 C62.6,22.2 60.3,27.7 59.8,27.7 C59.3,27.7 53.8,22.8 54.0,22.4 Z"/>
<path d="M45.8,67.3 C46.3,66.1 56.4,64.4 58.7,63.8 C61.0,63.2 67.5,60.8 69.2,61.5 C71.0,62.2 75.3,68.3 76.2,70.8 C77.1,73.2 78.7,83.8 78.5,86.0 C78.3,88.2 74.8,92.8 73.8,93.0 C72.8,93.2 69.0,89.7 68.0,88.3 C67.0,86.9 64.7,80.3 63.3,79.0 C61.9,77.7 55.8,76.7 54.0,75.5 C52.2,74.3 45.3,68.5 45.8,67.3 Z"/>
<path d="M85.5,55.7 C86.5,54.2 93.8,50.6 96.0,50.4 C98.2,50.2 106.8,52.3 107.7,53.3 C108.6,54.3 106.3,59.4 105.3,60.3 C104.2,61.2 97.4,61.8 97.2,62.7 C97.0,63.6 101.5,68.2 103.0,69.7 C104.5,71.2 111.6,76.3 112.3,77.8 C113.0,79.3 111.3,84.2 110.0,84.8 C108.7,85.4 101.7,84.8 99.5,83.7 C97.3,82.7 89.2,76.2 87.8,74.3 C86.4,72.4 85.7,66.9 85.5,65.0 C85.3,63.1 84.5,57.2 85.5,55.7 Z"/>
</g></g></g>
<g transform="translate(687.2,897.5)" fill="none" stroke="#d2d2d2" stroke-width="2.0" stroke-linecap="round" stroke-linejoin="round">
<path d="M2,2.2 L18.6,1.4 L19,22.4 L2.6,23.2 Z"/>
<path d="M7.6,4.6 L5.2,11.4 M7.8,5.4 L14.4,6.2 L5.8,17 M9.6,9.8 L16,15.8 M8.6,13.4 L12.4,15.4 M7,18 L13.4,19.6"/>
</g>
<g transform="translate(719.8000000000001,897.5)" fill="none" stroke="#d2d2d2" stroke-width="2.0" stroke-linecap="round" stroke-linejoin="round">
<path d="M1,0.8 L15,1.2 L14.6,6.6 L1.2,6.8 M1,0.8 L0.9,23.6 M6,11.6 L12.6,11.6 M3.8,15.2 L16,14.8 M8.2,15.6 L4.8,23.2 L15.6,23.8 M13,20.4 L15.6,23.8"/>
</g>
<path transform="translate(745.7,899.5) scale(1.0)" d="M2,2 L10,2 L5,8.5 C11,8.5 11,18.5 3,18.5" fill="none" stroke="#d2d2d2" stroke-width="2.00" stroke-linecap="round" stroke-linejoin="round"/>
<path transform="translate(760.2,899.5) scale(1.0)" d="M2,5 C3,0 11,0 10,6 C9,11 3,15 2,19 L11,18.5" fill="none" stroke="#d2d2d2" stroke-width="2.00" stroke-linecap="round" stroke-linejoin="round"/>
<rect x="680.5" y="923" width="93.5" height="1.6" fill="#cfcfcf"/>
<rect x="442" y="1108" width="640" height="1" fill="#3a3a3a"/>
<g transform="translate(480,1042.8)">
<path d="M-19.2,0 C-13,-19 13,-19 19.2,0 C13,19 -13,19 -19.2,0 Z" fill="#e0e0e0"/>
<circle r="8.7" fill="#262626"/><circle r="5" fill="#e0e0e0"/></g>
<g transform="translate(571.5,985)">
<clipPath id="tc77"><rect width="115" height="115" rx="7"/></clipPath>
<g clip-path="url(#tc77)"><rect width="115" height="115" fill="url(#chk)"/><defs><filter id="bl77" x="-80%" y="-80%" width="260%" height="260%"><feGaussianBlur stdDeviation="11"/></filter></defs>
<g filter="url(#bl77)" opacity="0.42"><ellipse cx="62" cy="60" rx="22" ry="26" fill="#dcc08a"/></g></g></g>
<g transform="translate(545.5,1077)">
<path d="M20.5,3.4 L14.5,3.4 Q10,3.4 10,8 L10,22" fill="none" stroke="#e0e0e0" stroke-width="3.4"/>
<path d="M2.4,21.3 L17.6,21.3 L10,29.6 Z" fill="#e0e0e0" stroke="#e0e0e0" stroke-width="2.8" stroke-linejoin="round"/></g>
<g transform="translate(711.7,1030.5)" fill="none" stroke="#d2d2d2" stroke-width="2.0" stroke-linecap="round" stroke-linejoin="round">
<path d="M2,2.2 L18.6,1.4 L19,22.4 L2.6,23.2 Z"/>
<path d="M7.6,4.6 L5.2,11.4 M7.8,5.4 L14.4,6.2 L5.8,17 M9.6,9.8 L16,15.8 M8.6,13.4 L12.4,15.4 M7,18 L13.4,19.6"/>
</g>
<g transform="translate(744.3000000000001,1030.5)" fill="none" stroke="#d2d2d2" stroke-width="2.0" stroke-linecap="round" stroke-linejoin="round">
<path d="M1,0.8 L15,1.2 L14.6,6.6 L1.2,6.8 M1,0.8 L0.9,23.6 M6,11.6 L12.6,11.6 M3.8,15.2 L16,14.8 M8.2,15.6 L4.8,23.2 L15.6,23.8 M13,20.4 L15.6,23.8"/>
</g>
<path transform="translate(770.2,1032.5) scale(1.0)" d="M1,2 L11,1.5 L5,19.5" fill="none" stroke="#d2d2d2" stroke-width="2.00" stroke-linecap="round" stroke-linejoin="round"/>
<path transform="translate(784.7,1032.5) scale(1.0)" d="M1,2 L11,1.5 L5,19.5" fill="none" stroke="#d2d2d2" stroke-width="2.00" stroke-linecap="round" stroke-linejoin="round"/>
<rect x="442" y="1241" width="640" height="1" fill="#3a3a3a"/>
<g transform="translate(480,1175.8)">
<path d="M-19.2,0 C-13,-19 13,-19 19.2,0 C13,19 -13,19 -19.2,0 Z" fill="#e0e0e0"/>
<circle r="8.7" fill="#262626"/><circle r="5" fill="#e0e0e0"/></g>
<g transform="translate(546.5,1118)">
<clipPath id="tc33"><rect width="115" height="115" rx="7"/></clipPath>
<g clip-path="url(#tc33)"><rect width="115" height="115" fill="url(#chk)"/><path d="M14.3,9.0 C16.6,7.0 23.0,2.3 27.2,3.2 C31.4,4.1 36.3,14.0 45.8,16.0 C55.3,18.0 90.4,14.4 98.3,18.3 C106.2,22.2 104.2,37.4 105.3,45.2 C106.4,53.0 107.6,69.4 106.5,76.7 C105.4,84.0 100.9,95.3 97.2,100.0 C93.5,104.7 84.4,110.8 78.5,111.7 C72.6,112.6 59.3,109.3 52.8,107.0 C46.3,104.7 34.9,99.0 29.5,94.2 C24.1,89.4 15.0,77.8 12.0,70.8 C9.0,63.8 7.6,48.7 7.3,41.7 C7.0,34.7 8.8,22.7 9.7,18.3 C10.6,13.9 12.0,11.0 14.3,9.0 Z" fill="#f1daa5"/></g></g>
<g transform="translate(687.2,1163.5)" fill="none" stroke="#d2d2d2" stroke-width="2.0" stroke-linecap="round" stroke-linejoin="round">
<path d="M2,2.2 L18.6,1.4 L19,22.4 L2.6,23.2 Z"/>
<path d="M7.6,4.6 L5.2,11.4 M7.8,5.4 L14.4,6.2 L5.8,17 M9.6,9.8 L16,15.8 M8.6,13.4 L12.4,15.4 M7,18 L13.4,19.6"/>
</g>
<g transform="translate(719.8000000000001,1163.5)" fill="none" stroke="#d2d2d2" stroke-width="2.0" stroke-linecap="round" stroke-linejoin="round">
<path d="M1,0.8 L15,1.2 L14.6,6.6 L1.2,6.8 M1,0.8 L0.9,23.6 M6,11.6 L12.6,11.6 M3.8,15.2 L16,14.8 M8.2,15.6 L4.8,23.2 L15.6,23.8 M13,20.4 L15.6,23.8"/>
</g>
<path transform="translate(745.7,1165.5) scale(1.0)" d="M2,2 L10,2 L5,8.5 C11,8.5 11,18.5 3,18.5" fill="none" stroke="#d2d2d2" stroke-width="2.00" stroke-linecap="round" stroke-linejoin="round"/>
<path transform="translate(760.2,1165.5) scale(1.0)" d="M2,2 L10,2 L5,8.5 C11,8.5 11,18.5 3,18.5" fill="none" stroke="#d2d2d2" stroke-width="2.00" stroke-linecap="round" stroke-linejoin="round"/>
<rect x="680.5" y="1189" width="93.5" height="1.6" fill="#cfcfcf"/>
<rect x="442" y="1374" width="640" height="1" fill="#3a3a3a"/>
<g transform="translate(480,1308.8)">
<path d="M-19.2,0 C-13,-19 13,-19 19.2,0 C13,19 -13,19 -19.2,0 Z" fill="#e0e0e0"/>
<circle r="8.7" fill="#262626"/><circle r="5" fill="#e0e0e0"/></g>
<g transform="translate(546.5,1251)">
<clipPath id="tc85"><rect width="115" height="115" rx="7"/></clipPath>
<g clip-path="url(#tc85)"><rect width="115" height="115" fill="url(#chk)"/><path d="M22.0,17.0 C23.2,15.6 32.5,13.5 35.0,13.0 C37.5,12.5 49.8,10.8 52.0,11.0 C54.2,11.2 60.3,13.8 62.0,15.0 C63.7,16.2 69.8,23.3 72.0,25.0 C74.2,26.7 86.8,33.4 88.0,35.0 C89.2,36.6 85.7,42.6 86.0,44.0 C86.3,45.4 90.8,50.5 92.0,52.0 C93.2,53.5 99.7,60.3 100.0,62.0 C100.3,63.7 97.2,70.7 96.0,72.0 C94.8,73.3 86.8,75.8 86.0,78.0 C85.2,80.2 86.7,97.0 86.0,99.0 C85.3,101.0 80.8,102.2 78.0,102.5 C75.2,102.8 54.3,104.1 52.0,103.0 C49.7,101.9 50.7,90.3 50.0,89.0 C49.3,87.7 44.7,85.9 44.0,87.0 C43.3,88.1 43.8,100.6 42.0,102.0 C40.2,103.4 24.8,105.8 23.0,104.0 C21.2,102.2 21.0,84.5 21.0,80.0 C21.0,75.5 23.1,54.2 23.0,50.0 C22.9,45.8 20.1,32.8 20.0,30.0 C19.9,27.2 20.8,18.4 22.0,17.0 Z" fill="#ffffff"/></g></g>
<g transform="translate(687.2,1296.5)" fill="none" stroke="#d2d2d2" stroke-width="2.0" stroke-linecap="round" stroke-linejoin="round">
<path d="M2,2.2 L18.6,1.4 L19,22.4 L2.6,23.2 Z"/>
<path d="M7.6,4.6 L5.2,11.4 M7.8,5.4 L14.4,6.2 L5.8,17 M9.6,9.8 L16,15.8 M8.6,13.4 L12.4,15.4 M7,18 L13.4,19.6"/>
</g>
<g transform="translate(719.8000000000001,1296.5)" fill="none" stroke="#d2d2d2" stroke-width="2.0" stroke-linecap="round" stroke-linejoin="round">
<path d="M1,0.8 L15,1.2 L14.6,6.6 L1.2,6.8 M1,0.8 L0.9,23.6 M6,11.6 L12.6,11.6 M3.8,15.2 L16,14.8 M8.2,15.6 L4.8,23.2 L15.6,23.8 M13,20.4 L15.6,23.8"/>
</g>
<path transform="translate(745.7,1298.5) scale(1.0)" d="M6,1 C1.5,1 1.5,9.5 6,9.8 C10.8,10.2 10.8,19.5 6,19.5 C1.2,19.5 1.2,10.2 6,9.8 C10.5,9.5 10.5,1 6,1 Z" fill="none" stroke="#d2d2d2" stroke-width="2.00" stroke-linecap="round" stroke-linejoin="round"/>
<path transform="translate(760.2,1298.5) scale(1.0)" d="M10,1.5 L3,1.5 L2.5,9 C10,6 11,18.5 3,18.5" fill="none" stroke="#d2d2d2" stroke-width="2.00" stroke-linecap="round" stroke-linejoin="round"/>
<rect x="519.5" y="1375" width="600" height="132" fill="#0578ff"/>
<rect x="442" y="1507" width="640" height="1" fill="#3a3a3a"/>
<g transform="translate(480,1441.8)">
<path d="M-19.2,0 C-13,-19 13,-19 19.2,0 C13,19 -13,19 -19.2,0 Z" fill="#e0e0e0"/>
<circle r="8.7" fill="#262626"/><circle r="5" fill="#e0e0e0"/></g>
<g transform="translate(546.5,1384)">
<clipPath id="tc84"><rect width="115" height="115" rx="7"/></clipPath>
<g clip-path="url(#tc84)"><rect width="115" height="115" fill="url(#chk)"/><defs><filter id="bl84" x="-20%" y="-20%" width="140%" height="140%"><feGaussianBlur stdDeviation="2"/></filter></defs>
<g filter="url(#bl84)">
<path d="M29.5,48.7 C31.4,48.4 36.9,52.9 38.8,55.7 C40.7,58.5 42.9,63.8 43.5,69.7 C44.1,75.6 44.9,95.3 43.5,100.0 C42.1,104.7 35.6,105.0 33.0,104.7 C30.4,104.4 25.1,101.4 23.7,97.7 C22.3,94.0 22.4,82.0 22.5,76.7 C22.6,71.4 23.9,61.7 24.8,58.0 C25.7,54.3 27.6,49.0 29.5,48.7 Z" fill="#8e5852"/>
<path d="M78.5,55.7 C80.5,54.1 86.2,60.7 87.8,65.0 C89.4,69.3 90.5,83.2 90.2,88.3 C89.9,93.4 87.5,101.6 85.5,103.5 C83.5,105.4 76.7,105.9 75.0,102.3 C73.3,98.7 72.2,82.9 72.7,76.7 C73.2,70.5 76.5,57.3 78.5,55.7 Z" fill="#8e5852"/>
<path d="M22.5,16.0 C24.1,13.8 29.9,13.4 33.0,13.7 C36.1,14.0 44.2,16.1 45.8,18.3 C47.4,20.5 46.1,26.6 44.7,30.0 C43.3,33.4 38.3,41.7 35.3,44.0 C32.3,46.3 24.8,48.1 22.5,47.5 C20.2,46.9 18.0,41.6 17.8,39.3 C17.6,37.0 20.7,33.1 21.3,30.0 C21.9,26.9 20.9,18.2 22.5,16.0 Z" fill="#4d8d68"/>
<path d="M75.0,31.2 C76.6,29.9 83.5,32.0 86.0,34.0 C88.5,36.0 93.2,43.0 93.7,46.0 C94.2,49.0 91.8,55.6 90.0,56.8 C88.2,58.0 82.1,56.7 80.0,55.0 C77.9,53.3 74.7,47.2 74.0,44.0 C73.3,40.8 73.4,32.5 75.0,31.2 Z" fill="#4d8d68"/>
<path d="M47.0,16.0 C50.4,15.2 62.9,16.4 66.8,18.3 C70.7,20.2 74.6,23.8 76.2,30.0 C77.8,36.2 78.5,58.8 78.5,65.0 C78.5,71.2 77.8,72.0 76.2,76.7 C74.6,81.4 70.2,96.0 66.8,100.0 C63.4,104.0 53.9,107.0 50.5,107.0 C47.1,107.0 43.1,104.0 41.2,100.0 C39.3,96.0 37.0,84.5 36.5,76.7 C36.0,68.9 37.1,48.7 37.7,41.7 C38.3,34.7 40.0,27.6 41.2,24.2 C42.4,20.8 43.6,16.8 47.0,16.0 Z" fill="#f4d6a2"/>
<path d="M44.7,14.0 C45.5,12.4 50.0,11.7 52.0,12.0 C54.0,12.3 59.3,14.3 59.8,16.0 C60.3,17.7 57.8,23.9 56.0,25.0 C54.2,26.1 47.5,25.5 46.0,24.0 C44.5,22.5 43.9,15.6 44.7,14.0 Z" fill="#5aa583"/>
<path d="M46.0,28.0 C48.8,25.2 64.9,24.3 68.0,27.0 C71.1,29.7 70.3,44.7 69.0,48.0 C67.7,51.3 60.9,52.0 58.0,52.0 C55.1,52.0 48.6,51.2 47.0,48.0 C45.4,44.8 43.2,30.8 46.0,28.0 Z" fill="#f6e3cf"/>
<circle cx="49.5" cy="37" r="3" fill="#6a9fcf"/><circle cx="63" cy="35" r="3" fill="#6a9fcf"/>
<path d="M60.0,54.0 C61.6,51.3 71.9,53.3 74.0,56.0 C76.1,58.7 77.6,71.3 76.0,74.0 C74.4,76.7 64.1,78.7 62.0,76.0 C59.9,73.3 58.4,56.7 60.0,54.0 Z" fill="#f0b66c"/>
<path d="M45,77 L73,77 L72,100 L46,100 Z" fill="#f6ddd6"/>
<path d="M52,80 L53,98 M60,80 L62,98" stroke="#e3a2a0" stroke-width="2"/>
<path d="M32.0,106.0 C33.6,105.2 44.7,103.0 50.0,103.0 C55.3,103.0 81.6,105.2 85.0,106.0 C88.4,106.8 89.1,110.5 84.0,111.0 C78.9,111.5 39.2,111.5 34.0,111.0 C28.8,110.5 30.4,106.8 32.0,106.0 Z" fill="#f1c98a"/>
</g></g></g>
<g transform="translate(687.2,1429.5)" fill="none" stroke="#cfeeff" stroke-width="2.0" stroke-linecap="round" stroke-linejoin="round">
<path d="M2,2.2 L18.6,1.4 L19,22.4 L2.6,23.2 Z"/>
<path d="M7.6,4.6 L5.2,11.4 M7.8,5.4 L14.4,6.2 L5.8,17 M9.6,9.8 L16,15.8 M8.6,13.4 L12.4,15.4 M7,18 L13.4,19.6"/>
</g>
<g transform="translate(719.8000000000001,1429.5)" fill="none" stroke="#cfeeff" stroke-width="2.0" stroke-linecap="round" stroke-linejoin="round">
<path d="M1,0.8 L15,1.2 L14.6,6.6 L1.2,6.8 M1,0.8 L0.9,23.6 M6,11.6 L12.6,11.6 M3.8,15.2 L16,14.8 M8.2,15.6 L4.8,23.2 L15.6,23.8 M13,20.4 L15.6,23.8"/>
</g>
<path transform="translate(745.7,1431.5) scale(1.0)" d="M6,1 C1.5,1 1.5,9.5 6,9.8 C10.8,10.2 10.8,19.5 6,19.5 C1.2,19.5 1.2,10.2 6,9.8 C10.5,9.5 10.5,1 6,1 Z" fill="none" stroke="#cfeeff" stroke-width="2.00" stroke-linecap="round" stroke-linejoin="round"/>
<path transform="translate(760.2,1431.5) scale(1.0)" d="M7,1 L1,14 L11,14 M8,5 L8,19" fill="none" stroke="#cfeeff" stroke-width="2.00" stroke-linecap="round" stroke-linejoin="round"/>
<rect x="442" y="1508" width="640" height="102" fill="#333333"/>
<g transform="translate(480,1560.5)">
<path d="M-19.2,0 C-13,-19 13,-19 19.2,0 C13,19 -13,19 -19.2,0 Z" fill="#e0e0e0"/>
<circle r="8.7" fill="#262626"/><circle r="5" fill="#e0e0e0"/></g>
<rect x="546.5" y="1520" width="115" height="77" rx="7" fill="#ffffff"/>
<g transform="translate(686,1546)" fill="none" stroke="#8e8e8e" stroke-width="2.0" stroke-linecap="round" stroke-linejoin="round">
<path d="M6,1 L6,9 L2,10 M1,4 L8,4 M13,1 L13,8 Q13,10 18,9 M13,4.5 L18,3 M4,12 L4,24 M4,12 L16,12 L16,24 L14,23 M4,16 L16,16 M4,20 L16,20"/></g>
<g transform="translate(716,1546)" fill="none" stroke="#8e8e8e" stroke-width="2.0" stroke-linecap="round" stroke-linejoin="round">
<path d="M4,1 L16,1 L16,8 L4,8 Z M4,4.5 L16,4.5 M10,9 L10,11 M1,11.5 L19,11.5 M5,14 L15,14 L15,18 L5,18 Z M10,18 L10,24 L8,23 M6,20 L2,24 M14,20 L18,24"/></g>
</g>
<rect x="519" y="230.5" width="1" height="1144" fill="#383838"/>
<rect x="519" y="1507" width="1" height="102" fill="#3c3c3c"/>
</g>
<g>
<rect x="413" y="1741" width="253.5" height="126.5" rx="9" fill="#262626"/>
<!-- bucket -->
<path d="M484.3,1762.5 L505.5,1782.6 L479.2,1806.6 L460.2,1787.6 Z" fill="none" stroke="#e0e0e0" stroke-width="3.6" stroke-linejoin="round"/>
<path d="M462,1784.3 L503.5,1784.3 L479.2,1806.6 L460.2,1787.6 Z" fill="#e0e0e0" stroke="#e0e0e0" stroke-width="2" stroke-linejoin="round"/>
<circle cx="473.3" cy="1765.2" r="4.3" fill="none" stroke="#e0e0e0" stroke-width="3.5"/>
<path d="M483.5,1767 L489.3,1776.3" stroke="#e0e0e0" stroke-width="3.4" stroke-linecap="round"/>
<path d="M507,1784 C509.5,1788 512.8,1791.5 512.8,1795 A5.4,5.4 0 0 1 502,1795 C502,1791.5 504.5,1788 507,1784 Z" fill="#e0e0e0"/>
<!-- blue eraser -->
<path d="M592.7,1782.4 L612.1,1761.5 L631.6,1781.1 L609.5,1801.6 Z" fill="#0a9aff" stroke="#0a9aff" stroke-width="1.5" stroke-linejoin="round"/>
<path d="M592.7,1782.4 L580.6,1793.4 L592.8,1805.5 L624.5,1805.5" fill="none" stroke="#0a9aff" stroke-width="3.8" stroke-linejoin="round"/>
<!-- labels -->
<g transform="translate(461,1827.5)" fill="none" stroke="#c9c9c9" stroke-width="1.8" stroke-linecap="round" stroke-linejoin="round">
<path d="M1,8 L7,7 M4,2 L4,16 L1,18 M9,3 L19,2.5 M14,1 L14,4 M10,6 L17,6 L17,14 L10,14 Z M10,10 L17,10 M9,17 L19,16.5 M12,17 L9,20 M16,17 L19,20"/></g>
<g transform="translate(488.5,1827.5)" fill="none" stroke="#c9c9c9" stroke-width="1.8" stroke-linecap="round" stroke-linejoin="round">
<path d="M10,0.5 L10,3 M2,4 L19,4 M9,5 L4,10 L16,9.5 M13,7 L16,10 M7,11 L5,19 M12,11 L12,19 L18,19"/></g>
<g transform="translate(583,1827.5)" fill="none" stroke="#2b90e6" stroke-width="1.8" stroke-linecap="round" stroke-linejoin="round">
<path d="M1,6 L6,5 M3.5,1 L3.5,18 L1.5,19 M7,3 L19,3 M8,3 L8,6 M18,3 L18,6 M9,7 L17,7 M10,10 L17,10 M8,13 L19,13 M13,10 L13,20 M10,16 L7,19 M16,16 L19,19"/></g>
<g transform="translate(608.5,1827.5)" fill="none" stroke="#2b90e6" stroke-width="1.8" stroke-linecap="round" stroke-linejoin="round">
<path d="M2,1 L2,20 M2,1 L7,1 L4,7 L8,11 L5,14 M13,1 L8,7 M13,1 L19,7 M10,8 L17,8 M9,12 L18,12 M13.5,8 L13.5,19 L11.5,18 M11,15 L9,18 M16,15 L18,18"/></g>
</g>
</svg>
</body></html>
